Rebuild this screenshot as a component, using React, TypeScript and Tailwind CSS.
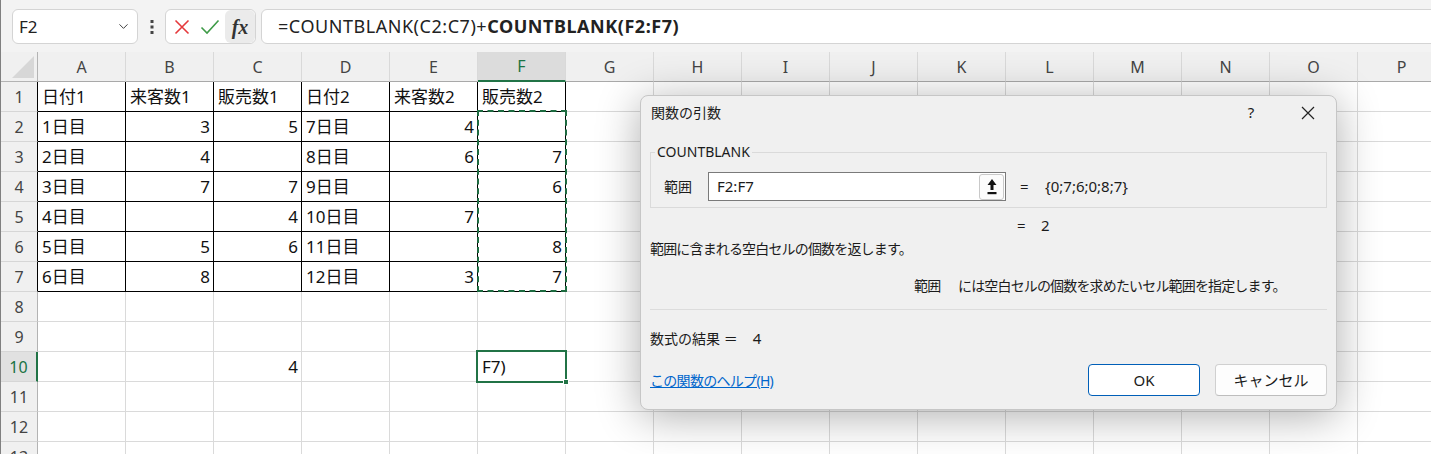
import { ChevronDown } from "lucide-react"

const cols = ["A", "B", "C", "D", "E", "F", "G", "H", "I", "J", "K", "L", "M", "N", "O", "P"]

const data: Record<number, string[]> = {
  1: ["日付1", "来客数1", "販売数1", "日付2", "来客数2", "販売数2"],
  2: ["1日目", "3", "5", "7日目", "4", ""],
  3: ["2日目", "4", "", "8日目", "6", "7"],
  4: ["3日目", "7", "7", "9日目", "", "6"],
  5: ["4日目", "", "4", "10日目", "7", ""],
  6: ["5日目", "5", "6", "11日目", "", "8"],
  7: ["6日目", "8", "", "12日目", "3", "7"],
  10: ["", "", "4", "", "", "F7)"],
}

const rows = Array.from({ length: 13 }, (_, i) => i + 1)

function GridCell({ row, col }: { row: number; col: number }) {
  const inTable = row <= 7 && col <= 5
  const value = data[row]?.[col] ?? ""
  const isNum = /^\d+$/.test(value)
  return (
    <div
      className={`flex h-[30px] w-[88px] shrink-0 items-center border-r border-b px-[4px] text-[17px] text-[#111] ${
        inTable ? "border-black" : "border-[#dadada]"
      } ${isNum ? "justify-end pr-[3px]" : ""}`}
    >
      {value}
    </div>
  )
}

function RowHeader({ row }: { row: number }) {
  const active = row === 10
  const edge = active
    ? "border-r-2 border-r-[#217346] bg-[#e1e1e1] text-[#1a7343]"
    : row <= 7
      ? "border-r border-r-black bg-[#f0f0f0] text-[#444]"
      : "border-r border-r-[#b3b3b3] bg-[#f0f0f0] text-[#444]"
  return (
    <div className={`flex h-[30px] w-[37px] shrink-0 items-center justify-center border-b border-b-[#d6d6d6] text-[16px] ${edge}`}>
      {row}
    </div>
  )
}

function FormulaBar() {
  return (
    <div className="flex h-[52px] items-start bg-[#f3f3f3] pt-[9px]">
      <div className="ml-[11px] flex h-[35px] w-[126px] items-center justify-between rounded-md border border-[#d4d4d4] bg-white pl-[6px] pr-[6px] text-[17px] text-[#222]">
        <span>F2</span>
        <ChevronDown size={15} strokeWidth={1.5} className="text-[#333]" />
      </div>
      <div className="flex h-[35px] w-[27px] items-center justify-center">
        <svg width="6" height="16" viewBox="0 0 6 16">
          <rect x="1.5" y="1" width="3" height="3" fill="#444" />
          <rect x="1.5" y="6.5" width="3" height="3" fill="#444" />
          <rect x="1.5" y="12" width="3" height="3" fill="#444" />
        </svg>
      </div>
      <div className="flex h-[35px] w-[91px] items-center overflow-hidden rounded-md border border-[#d4d4d4] bg-white">
        <div className="flex w-[29px] justify-center pl-[2px]">
          <svg width="16" height="16" viewBox="0 0 16 16">
            <path d="M1.5 1.5 L14.5 14.5 M14.5 1.5 L1.5 14.5" stroke="#e5393c" strokeWidth="1.6" fill="none" />
          </svg>
        </div>
        <div className="flex w-[30px] justify-center">
          <svg width="20" height="16" viewBox="0 0 20 16">
            <path d="M1.5 8.5 L7 14 L18.5 1.5" stroke="#3f9b48" strokeWidth="1.6" fill="none" />
          </svg>
        </div>
        <div className="flex h-full flex-1 items-center justify-center rounded-md bg-[#ebebeb] font-['Liberation_Serif',serif] text-[20px] font-semibold italic text-[#333]">
          fx
        </div>
      </div>
      <div className="ml-[5px] mr-[-10px] flex h-[35px] flex-1 items-center rounded-md border border-[#d4d4d4] bg-white pl-[16px] text-[18px] tracking-[0.03em] text-[#222]">
        <span>=COUNTBLANK(C2:C7)+</span>
        <span className="font-bold">COUNTBLANK(F2:F7)</span>
      </div>
    </div>
  )
}

function ColumnHeaders() {
  return (
    <div className="flex h-[30px]">
      <div className="flex h-[30px] w-[37px] shrink-0 items-end justify-end border-r border-b border-[#b3b3b3] bg-[#f0f0f0] pb-[3px] pr-[2px]">
        <svg width="23" height="22" viewBox="0 0 23 22">
          <path d="M0 22 L22 0 L22 22 Z" fill="#d7d7d7" />
        </svg>
      </div>
      {cols.map((c) => {
        const active = c === "F"
        return (
          <div
            key={c}
            className={`flex h-[30px] w-[88px] shrink-0 items-center justify-center border-r border-r-[#d9d9d9] text-[16px] ${
              active
                ? "border-b-2 border-b-[#217346] bg-[#dcdcdc] text-[#1a7343]"
                : "border-b border-b-[#a9a9a9] bg-[#f0f0f0] text-[#444]"
            }`}
          >
            {c}
          </div>
        )
      })}
    </div>
  )
}

function UploadIcon() {
  return (
    <svg width="10" height="17" viewBox="0 0 10 17">
      <path d="M5 1 L9.5 7 L6.5 7 L6.5 12 L3.5 12 L3.5 7 L0.5 7 Z" fill="#111" />
      <rect x="0.5" y="14" width="9" height="2.2" fill="#111" />
    </svg>
  )
}

function ArgumentsDialog() {
  return (
    <div className="absolute left-[639px] top-[95px] flex h-[315px] w-[697px] flex-col rounded-lg border border-[#c6c6c6] bg-[#f0f0f0] pl-[9px] pr-[9px] text-[14px] text-[#1b1b1b] shadow-[0_6px_44px_rgba(0,0,0,0.32)]">
      <div className="flex h-[33px] items-center pl-[1px]">
        <span className="flex-1">関数の引数</span>
        <span className="w-[20px] text-center text-[15px]">?</span>
        <span className="ml-[38px] mr-[10px] flex w-[18px] justify-center">
          <svg width="14" height="14" viewBox="0 0 14 14">
            <path d="M1 1 L13 13 M13 1 L1 13" stroke="#222" strokeWidth="1.2" fill="none" />
          </svg>
        </span>
      </div>

      <fieldset className="mt-[16px] border border-[#dadada] pb-[6px] pl-[13px]">
        <legend className="ml-[-9px] px-[2px] text-[14px] leading-[14px]">COUNTBLANK</legend>
        <div className="mt-[13px] flex h-[29px] items-center">
          <span className="w-[44px]">範囲</span>
          <div className="flex h-[29px] w-[298px] items-center justify-between border border-[#7a7a7a] bg-white pl-[8px] pr-[1px]">
            <span className="text-[15px]">F2:F7</span>
            <div className="flex h-[26px] w-[25px] items-center justify-center rounded-[3px] border border-[#c9c9c9] bg-[#fbfbfb]">
              <UploadIcon />
            </div>
          </div>
          <span className="ml-[14px] w-[25px] text-[15px]">=</span>
          <span className="text-[15px]">{"{0;7;6;0;8;7}"}</span>
        </div>
      </fieldset>

      <div className="mt-[7px] flex h-[20px] items-center pl-[367px] text-[15px]">
        <span className="w-[24px]">=</span>
        <span>2</span>
      </div>
      <div className="mt-[3px] flex h-[20px] items-center tracking-[-0.06em]">範囲に含まれる空白セルの個数を返します。</div>
      <div className="mt-[17px] flex h-[20px] items-center pl-[264px] tracking-[-0.06em]">
        <span className="w-[44px]">範囲</span>
        <span>には空白セルの個数を求めたいセル範囲を指定します。</span>
      </div>
      <div className="mt-[14px] h-px bg-[#dcdcdc]" />
      <div className="mt-[18px] flex h-[20px] items-center">
        数式の結果 ＝
        <span className="ml-[15px] text-[15px]">4</span>
      </div>
      <div className="mt-[16px] flex h-[32px] items-center">
        <span className="flex-1 text-[#0066cc] underline tracking-[-0.05em]">この関数のヘルプ(H)</span>
        <button className="h-[32px] w-[112px] rounded-[4px] border border-[#005fb8] bg-white text-[15px] text-[#1b1b1b]">
          OK
        </button>
        <button className="ml-[15px] h-[32px] w-[112px] rounded-[4px] border border-[#d0d0d0] border-b-[#bdbdbd] bg-[#fdfdfd] text-[15px] text-[#1b1b1b]">
          キャンセル
        </button>
      </div>
    </div>
  )
}

export default function App() {
  return (
    <div className="relative h-[454px] w-[1431px] overflow-hidden border-l border-[#808080] bg-white font-['Noto_Sans','Noto_Sans_CJK_JP',sans-serif]">
      <FormulaBar />
      <ColumnHeaders />
      {rows.map((r) => (
        <div key={r} className="flex h-[30px]">
          <RowHeader row={r} />
          {cols.map((c, i) => (
            <GridCell key={c} row={r} col={i} />
          ))}
        </div>
      ))}

      {/* copy marquee around F2:F7 */}
      <div className="absolute left-[476px] top-[110px] h-[182px] w-[90px] border-2 border-dashed border-[#1d6b40]" />

      {/* active cell F10 */}
      <div className="absolute left-[475px] top-[350px] h-[33px] w-[91px] border-2 border-[#217346]" />
      <div className="absolute left-[562px] top-[379px] h-[6px] w-[6px] border border-white bg-[#217346]" />

      <ArgumentsDialog />
    </div>
  )
}
